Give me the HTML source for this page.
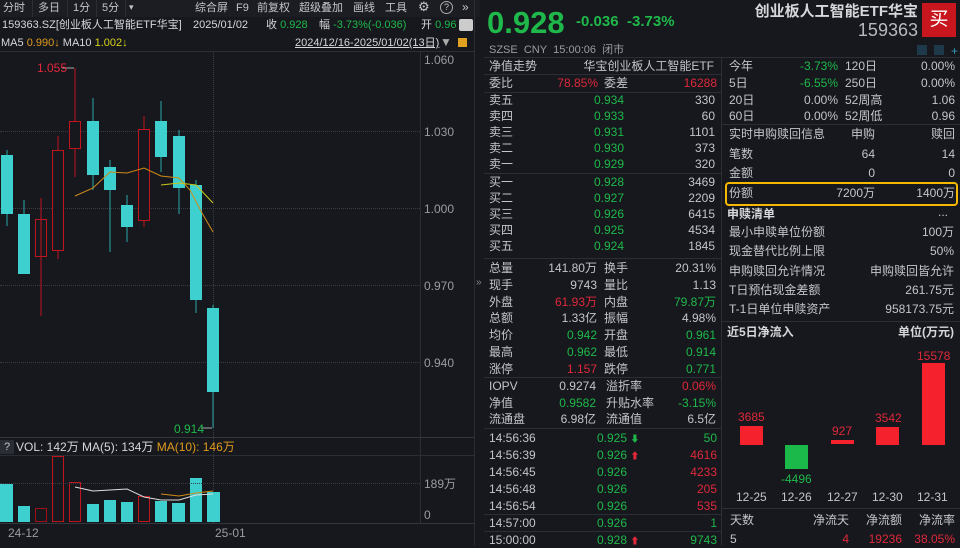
<!DOCTYPE html>
<html><head><meta charset="utf-8"><style>
*{margin:0;padding:0;box-sizing:border-box}
body{width:960px;height:545px;background:#16181d;overflow:hidden;position:relative;font-family:"Liberation Sans","Noto Sans CJK SC",sans-serif;color:#c3c5c9;font-size:12px}
.t{position:absolute;white-space:nowrap;line-height:14px;font-size:12px}
.s{font-size:11px}
.g{color:#1fb84a}.r{color:#e0283a}.o{color:#e09a1e}.y{color:#d8d21a}.w{color:#d6d7da}
.hl{position:absolute;height:1px;background:#2b2e35}
.vl{position:absolute;width:1px;background:#2b2e35}
.dot{position:absolute;height:0;border-top:1px dotted #3a3d44}
</style></head><body>
<div style="position:absolute;left:0;top:0;width:480px;height:17px;background:#1b1d22"></div>
<div class="t s" style="left:3px;top:1px">分时</div><div class="t s" style="left:38px;top:1px">多日</div><div class="t s" style="left:73px;top:1px">1分</div><div class="t s" style="left:102px;top:1px">5分</div><div class="t" style="left:129px;top:0px;font-size:9px">▾</div>
<div class="t s" style="left:195px;top:1px">综合屏</div><div class="t s" style="left:236px;top:1px">F9</div><div class="t s" style="left:257px;top:1px">前复权</div><div class="t s" style="left:299px;top:1px">超级叠加</div><div class="t s" style="left:353px;top:1px">画线</div><div class="t s" style="left:385px;top:1px">工具</div>
<div class="t" style="left:418px;top:0px;font-size:13px">⚙</div><div class="t" style="left:440px;top:1px;width:13px;height:13px;border:1px solid #aaa;border-radius:50%;font-size:9px;line-height:11px;text-align:center">?</div><div class="t" style="left:462px;top:0px">»</div>
<div class="vl" style="left:32px;top:0;height:17px"></div><div class="vl" style="left:67px;top:0;height:17px"></div><div class="vl" style="left:96px;top:0;height:17px"></div><div class="vl" style="left:125px;top:0;height:17px"></div>
<div class="t w s" style="left:2px;top:18px">159363.SZ[创业板人工智能ETF华宝]</div>
<div class="t w s" style="left:193px;top:18px">2025/01/02</div>
<div class="t w s" style="left:266px;top:18px">收 <span class="g">0.928</span></div>
<div class="t w s" style="left:319px;top:18px">幅 <span class="g">-3.73%(-0.036)</span></div>
<div class="t w s" style="left:421px;top:18px">开 <span class="g">0.96</span></div>
<div class="t" style="left:459px;top:19px;width:14px;height:12px;background:#ccc;border-radius:2px"></div>
<div class="t w s" style="left:1px;top:36px">MA5 <span class="o">0.990↓</span> MA10 <span class="y">1.002↓</span></div>
<div class="t w s" style="left:295px;top:36px;text-decoration:underline">2024/12/16-2025/01/02(13日)</div>
<div class="t" style="left:440px;top:35px;color:#aaa">▼</div>
<div class="t" style="left:458px;top:38px;width:9px;height:9px;background:#e0a020"></div>
<div class="hl" style="left:0;top:51px;width:474px"></div>
<div class="vl" style="left:420px;top:52px;height:471px"></div>
<div class="vl" style="left:474px;top:0;height:545px"></div>
<div class="dot" style="left:0;top:131px;width:420px"></div><div class="dot" style="left:0;top:208px;width:420px"></div><div class="dot" style="left:0;top:285px;width:420px"></div><div class="dot" style="left:0;top:362px;width:420px"></div>
<div style="position:absolute;left:213px;top:52px;height:471px;border-left:1px dotted #3a3d44"></div>
<div class="t" style="left:424px;top:53px;color:#9a9ca1">1.060</div><div class="t" style="left:424px;top:125px;color:#9a9ca1">1.030</div><div class="t" style="left:424px;top:202px;color:#9a9ca1">1.000</div><div class="t" style="left:424px;top:279px;color:#9a9ca1">0.970</div><div class="t" style="left:424px;top:356px;color:#9a9ca1">0.940</div>
<svg style="position:absolute;left:0;top:0" width="420" height="545">
<g stroke-width="1">
<line x1="7" y1="150" x2="7" y2="226" stroke="#2aa6a6"/><rect x="1" y="155" width="12" height="59" fill="#3ecfcf"/>
<line x1="24" y1="200" x2="24" y2="274" stroke="#2aa6a6"/><rect x="18" y="214" width="12" height="60" fill="#3ecfcf"/>
<line x1="41" y1="198" x2="41" y2="316" stroke="#c0141e"/><rect x="35.5" y="219.5" width="11" height="37" fill="none" stroke="#c0141e"/>
<line x1="58" y1="136" x2="58" y2="259" stroke="#c0141e"/><rect x="52.5" y="150.5" width="11" height="100" fill="#16181d" stroke="#c0141e"/>
<line x1="75" y1="68" x2="75" y2="177" stroke="#c0141e"/><rect x="69.5" y="121.5" width="11" height="27" fill="#16181d" stroke="#c0141e"/>
<line x1="93" y1="98" x2="93" y2="190" stroke="#2aa6a6"/><rect x="87" y="121" width="12" height="54" fill="#3ecfcf"/>
<line x1="110" y1="160" x2="110" y2="252" stroke="#2aa6a6"/><rect x="104" y="167" width="12" height="23" fill="#3ecfcf"/>
<line x1="127" y1="195" x2="127" y2="242" stroke="#2aa6a6"/><rect x="121" y="205" width="12" height="22" fill="#3ecfcf"/>
<line x1="144" y1="116" x2="144" y2="227" stroke="#c0141e"/><rect x="138.5" y="129.5" width="11" height="91" fill="#16181d" stroke="#c0141e"/>
<line x1="161" y1="101" x2="161" y2="172" stroke="#2aa6a6"/><rect x="155" y="121" width="12" height="36" fill="#3ecfcf"/>
<line x1="179" y1="130" x2="179" y2="214" stroke="#2aa6a6"/><rect x="173" y="136" width="12" height="52" fill="#3ecfcf"/>
<line x1="196" y1="180" x2="196" y2="313" stroke="#2aa6a6"/><rect x="190" y="185" width="12" height="115" fill="#3ecfcf"/>
<line x1="213" y1="305" x2="213" y2="428" stroke="#2aa6a6"/><rect x="207" y="308" width="12" height="84" fill="#3ecfcf"/>
</g>
<polyline points="75,196 93,188 110,172 127,173 144,168 161,176 179,178 190,190 202,213 213,232" fill="none" stroke="#d08a18" stroke-width="1"/>
<polyline points="161,185 179,183 196,185 213,203" fill="none" stroke="#c8c81a" stroke-width="1"/>
<line x1="62" y1="68" x2="74" y2="68" stroke="#aaa"/><line x1="201" y1="428" x2="212" y2="428" stroke="#aaa"/>
<g>
<rect x="0" y="484" width="13" height="38" fill="#3ecfcf"/>
<rect x="18" y="506" width="12" height="16" fill="#3ecfcf"/>
<rect x="35.5" y="508.5" width="11" height="13" fill="none" stroke="#a01018"/>
<rect x="52.5" y="456.5" width="11" height="65" fill="none" stroke="#c0141e"/>
<rect x="69.5" y="482.5" width="11" height="39" fill="none" stroke="#c0141e"/>
<rect x="87" y="504" width="12" height="18" fill="#3ecfcf"/>
<rect x="104" y="500" width="12" height="22" fill="#3ecfcf"/>
<rect x="121" y="502" width="12" height="20" fill="#3ecfcf"/>
<rect x="138.5" y="496.5" width="11" height="25" fill="none" stroke="#c0141e"/>
<rect x="155" y="501" width="12" height="21" fill="#3ecfcf"/>
<rect x="172" y="503" width="13" height="19" fill="#3ecfcf"/>
<rect x="190" y="478" width="12" height="44" fill="#3ecfcf"/>
<rect x="207" y="492" width="13" height="30" fill="#3ecfcf"/>
</g>
<polyline points="75,487 93,491 110,490 127,489 144,497 161,500 179,500 196,495 213,494" fill="none" stroke="#ddd" stroke-width="1"/>
<polyline points="161,494 179,496 196,493 213,491" fill="none" stroke="#d08a18" stroke-width="1"/>
</svg>
<div class="t r" style="left:37px;top:61px">1.055</div>
<div class="t g" style="left:174px;top:422px">0.914</div>
<div class="hl" style="left:0;top:437px;width:474px;background:#33363d"></div>
<div class="t" style="left:0;top:440px;width:14px;height:14px;background:#2a2d33;text-align:center;font-size:11px">?</div>
<div class="t w" style="left:16px;top:440px">VOL: 142万 MA(5): 134万 <span class="o">MA(10): 146万</span></div>
<div class="hl" style="left:0;top:455px;width:474px"></div>
<div class="dot" style="left:0;top:483px;width:420px"></div>
<div class="t" style="left:424px;top:477px;color:#9a9ca1">189万</div><div class="t" style="left:424px;top:508px;color:#9a9ca1">0</div>
<div class="hl" style="left:0;top:523px;width:474px;background:#33363d"></div>
<div class="t" style="left:8px;top:526px;color:#9a9ca1">24-12</div><div class="t" style="left:215px;top:526px;color:#9a9ca1">25-01</div>
<div class="t" style="left:476px;top:276px;font-size:10px;color:#888">»</div>

<div class="t g" style="left:487px;top:6px;font-size:31px;line-height:34px;font-weight:bold">0.928</div>
<div class="t g" style="left:576px;top:13px;font-size:15px;line-height:18px;font-weight:bold">-0.036</div>
<div class="t g" style="left:627px;top:13px;font-size:15px;line-height:18px;font-weight:bold">-3.73%</div>
<div class="t w" style="right:42px;top:3px;font-size:15px;line-height:18px;font-weight:bold">创业板人工智能ETF华宝</div>
<div class="t" style="right:42px;top:20px;font-size:18px;line-height:20px;color:#b8babe">159363</div>
<div class="t" style="left:922px;top:3px;width:34px;height:34px;background:#c8161e;color:#fff;font-size:19px;line-height:34px;text-align:center">买</div>
<div class="t" style="left:489px;top:43px;color:#9a9ca1;font-size:11px">SZSE&nbsp; CNY&nbsp; 15:00:06&nbsp; 闭市</div>
<div class="t" style="left:917px;top:45px;width:10px;height:10px;background:#1e3a4a"></div><div class="t" style="left:934px;top:45px;width:10px;height:10px;background:#1e3a4a"></div><div class="t" style="left:951px;top:44px;color:#39b;font-size:12px">+</div>
<div class="hl" style="left:484px;top:57px;width:476px"></div>
<div class="vl" style="left:721px;top:57px;height:488px"></div>

<div class="t" style="left:489px;top:59px">净值走势</div><div class="t" style="right:246px;top:59px">华宝创业板人工智能ETF</div>
<div class="hl" style="left:484px;top:74px;width:237px"></div>
<div class="t" style="left:489px;top:76px">委比</div><div class="t r" style="right:362px;top:76px">78.85%</div><div class="t" style="left:604px;top:76px">委差</div><div class="t r" style="right:243px;top:76px">16288</div>
<div class="hl" style="left:484px;top:92px;width:237px"></div>
<div class="t" style="left:489px;top:93px">卖五</div><div class="t g" style="right:336px;top:93px">0.934</div><div class="t" style="right:245px;top:93px">330</div>
<div class="t" style="left:489px;top:109px">卖四</div><div class="t g" style="right:336px;top:109px">0.933</div><div class="t" style="right:245px;top:109px">60</div>
<div class="t" style="left:489px;top:125px">卖三</div><div class="t g" style="right:336px;top:125px">0.931</div><div class="t" style="right:245px;top:125px">1101</div>
<div class="t" style="left:489px;top:141px">卖二</div><div class="t g" style="right:336px;top:141px">0.930</div><div class="t" style="right:245px;top:141px">373</div>
<div class="t" style="left:489px;top:157px">卖一</div><div class="t g" style="right:336px;top:157px">0.929</div><div class="t" style="right:245px;top:157px">320</div>
<div class="hl" style="left:484px;top:173px;width:237px"></div>
<div class="t" style="left:489px;top:175px">买一</div><div class="t g" style="right:336px;top:175px">0.928</div><div class="t" style="right:245px;top:175px">3469</div>
<div class="t" style="left:489px;top:191px">买二</div><div class="t g" style="right:336px;top:191px">0.927</div><div class="t" style="right:245px;top:191px">2209</div>
<div class="t" style="left:489px;top:207px">买三</div><div class="t g" style="right:336px;top:207px">0.926</div><div class="t" style="right:245px;top:207px">6415</div>
<div class="t" style="left:489px;top:223px">买四</div><div class="t g" style="right:336px;top:223px">0.925</div><div class="t" style="right:245px;top:223px">4534</div>
<div class="t" style="left:489px;top:239px">买五</div><div class="t g" style="right:336px;top:239px">0.924</div><div class="t" style="right:245px;top:239px">1845</div>
<div class="hl" style="left:484px;top:258px;width:237px"></div>
<div class="t" style="left:489px;top:261px">总量</div><div class="t" style="right:363px;top:261px">141.80万</div><div class="t" style="left:604px;top:261px">换手</div><div class="t" style="right:244px;top:261px">20.31%</div>
<div class="t" style="left:489px;top:278px">现手</div><div class="t" style="right:363px;top:278px">9743</div><div class="t" style="left:604px;top:278px">量比</div><div class="t" style="right:244px;top:278px">1.13</div>
<div class="t" style="left:489px;top:295px">外盘</div><div class="t r" style="right:363px;top:295px">61.93万</div><div class="t" style="left:604px;top:295px">内盘</div><div class="t g" style="right:244px;top:295px">79.87万</div>
<div class="t" style="left:489px;top:311px">总额</div><div class="t" style="right:363px;top:311px">1.33亿</div><div class="t" style="left:604px;top:311px">振幅</div><div class="t" style="right:244px;top:311px">4.98%</div>
<div class="t" style="left:489px;top:328px">均价</div><div class="t g" style="right:363px;top:328px">0.942</div><div class="t" style="left:604px;top:328px">开盘</div><div class="t g" style="right:244px;top:328px">0.961</div>
<div class="t" style="left:489px;top:345px">最高</div><div class="t g" style="right:363px;top:345px">0.962</div><div class="t" style="left:604px;top:345px">最低</div><div class="t g" style="right:244px;top:345px">0.914</div>
<div class="t" style="left:489px;top:362px">涨停</div><div class="t r" style="right:363px;top:362px">1.157</div><div class="t" style="left:604px;top:362px">跌停</div><div class="t g" style="right:244px;top:362px">0.771</div>
<div class="hl" style="left:484px;top:377px;width:237px"></div>
<div class="t" style="left:489px;top:379px">IOPV</div><div class="t" style="right:364px;top:379px">0.9274</div><div class="t" style="left:606px;top:379px">溢折率</div><div class="t r" style="right:244px;top:379px">0.06%</div>
<div class="t" style="left:489px;top:396px">净值</div><div class="t g" style="right:364px;top:396px">0.9582</div><div class="t" style="left:606px;top:396px">升贴水率</div><div class="t g" style="right:244px;top:396px">-3.15%</div>
<div class="t" style="left:489px;top:412px">流通盘</div><div class="t" style="right:364px;top:412px">6.98亿</div><div class="t" style="left:606px;top:412px">流通值</div><div class="t" style="right:244px;top:412px">6.5亿</div>
<div class="hl" style="left:484px;top:428px;width:237px"></div>
<div class="t" style="left:489px;top:431px">14:56:36</div><div class="t g" style="left:597px;top:431px">0.925 <span style="font-size:9px">⬇</span></div><div class="t g" style="right:243px;top:431px">50</div>
<div class="t" style="left:489px;top:448px">14:56:39</div><div class="t g" style="left:597px;top:448px">0.926 <span class="r" style="font-size:9px">⬆</span></div><div class="t r" style="right:243px;top:448px">4616</div>
<div class="t" style="left:489px;top:465px">14:56:45</div><div class="t g" style="left:597px;top:465px">0.926</div><div class="t r" style="right:243px;top:465px">4233</div>
<div class="t" style="left:489px;top:482px">14:56:48</div><div class="t g" style="left:597px;top:482px">0.926</div><div class="t r" style="right:243px;top:482px">205</div>
<div class="t" style="left:489px;top:499px">14:56:54</div><div class="t g" style="left:597px;top:499px">0.926</div><div class="t r" style="right:243px;top:499px">535</div>
<div class="hl" style="left:484px;top:514px;width:237px"></div>
<div class="t" style="left:489px;top:516px">14:57:00</div><div class="t g" style="left:597px;top:516px">0.926</div><div class="t g" style="right:243px;top:516px">1</div>
<div class="hl" style="left:484px;top:531px;width:237px"></div>
<div class="t" style="left:489px;top:533px">15:00:00</div><div class="t g" style="left:597px;top:533px">0.928 <span class="r" style="font-size:9px">⬆</span></div><div class="t g" style="right:243px;top:533px">9743</div>

<div class="t" style="left:729px;top:59px">今年</div><div class="t g" style="right:122px;top:59px">-3.73%</div><div class="t" style="left:845px;top:59px">120日</div><div class="t" style="right:5px;top:59px">0.00%</div>
<div class="t" style="left:729px;top:76px">5日</div><div class="t g" style="right:122px;top:76px">-6.55%</div><div class="t" style="left:845px;top:76px">250日</div><div class="t" style="right:5px;top:76px">0.00%</div>
<div class="t" style="left:729px;top:93px">20日</div><div class="t" style="right:122px;top:93px">0.00%</div><div class="t" style="left:845px;top:93px">52周高</div><div class="t" style="right:5px;top:93px">1.06</div>
<div class="t" style="left:729px;top:109px">60日</div><div class="t" style="right:122px;top:109px">0.00%</div><div class="t" style="left:845px;top:109px">52周低</div><div class="t" style="right:5px;top:109px">0.96</div>
<div class="hl" style="left:722px;top:124px;width:238px"></div>
<div class="t" style="left:729px;top:127px">实时申购赎回信息</div><div class="t" style="right:85px;top:127px">申购</div><div class="t" style="right:5px;top:127px">赎回</div>
<div class="t" style="left:729px;top:147px">笔数</div><div class="t" style="right:85px;top:147px">64</div><div class="t" style="right:5px;top:147px">14</div>
<div class="t" style="left:729px;top:166px">金额</div><div class="t" style="right:85px;top:166px">0</div><div class="t" style="right:5px;top:166px">0</div>
<div class="t" style="left:725px;top:182px;width:233px;height:24px;border:2px solid #f5b800;border-radius:4px"></div>
<div class="t" style="left:729px;top:186px">份额</div><div class="t" style="right:85px;top:186px">7200万</div><div class="t" style="right:5px;top:186px">1400万</div>
<div class="t w" style="left:727px;top:207px;font-weight:bold">申赎清单</div><div class="t" style="right:12px;top:205px">...</div>
<div class="t" style="left:729px;top:225px">最小申赎单位份额</div><div class="t" style="right:6px;top:225px">100万</div>
<div class="t" style="left:729px;top:244px">现金替代比例上限</div><div class="t" style="right:6px;top:244px">50%</div>
<div class="t" style="left:729px;top:264px">申购赎回允许情况</div><div class="t" style="right:6px;top:264px">申购赎回皆允许</div>
<div class="t" style="left:729px;top:283px">T日预估现金差额</div><div class="t" style="right:6px;top:283px">261.75元</div>
<div class="t" style="left:729px;top:302px">T-1日单位申赎资产</div><div class="t" style="right:6px;top:302px">958173.75元</div>
<div class="hl" style="left:722px;top:321px;width:238px"></div>
<div class="t w" style="left:727px;top:325px;font-weight:bold">近5日净流入</div><div class="t w" style="right:6px;top:325px;font-weight:bold">单位(万元)</div>
<div class="t" style="left:740px;top:426px;width:23px;height:19px;background:#f5222d"></div><div class="t r" style="left:738px;top:410px">3685</div>
<div class="t" style="left:785px;top:445px;width:23px;height:24px;background:#1bb84a"></div><div class="t g" style="left:781px;top:472px">-4496</div>
<div class="t" style="left:831px;top:440px;width:23px;height:4px;background:#f5222d"></div><div class="t r" style="left:832px;top:424px">927</div>
<div class="t" style="left:876px;top:427px;width:23px;height:18px;background:#f5222d"></div><div class="t r" style="left:875px;top:411px">3542</div>
<div class="t" style="left:922px;top:363px;width:23px;height:82px;background:#f5222d"></div><div class="t r" style="left:917px;top:349px">15578</div>
<div class="t" style="left:736px;top:490px">12-25</div><div class="t" style="left:781px;top:490px">12-26</div><div class="t" style="left:827px;top:490px">12-27</div><div class="t" style="left:872px;top:490px">12-30</div><div class="t" style="left:917px;top:490px">12-31</div>
<div class="hl" style="left:722px;top:508px;width:238px"></div>
<div class="t" style="left:730px;top:513px">天数</div><div class="t" style="right:111px;top:513px">净流天</div><div class="t" style="right:58px;top:513px">净流额</div><div class="t" style="right:5px;top:513px">净流率</div>
<div class="t" style="left:730px;top:532px">5</div><div class="t r" style="right:111px;top:532px">4</div><div class="t r" style="right:58px;top:532px">19236</div><div class="t r" style="right:5px;top:532px">38.05%</div>
</body></html>
